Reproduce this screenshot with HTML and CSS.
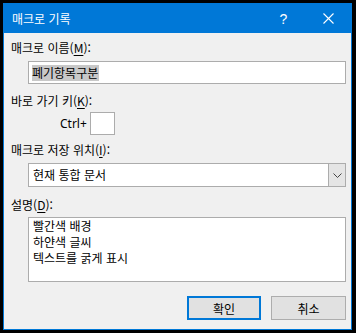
FILE: index.html
```html
<!DOCTYPE html>
<html lang="ko">
<head>
  <meta charset="UTF-8" />
  <title>매크로 기록</title>
  <link rel="stylesheet" href="styles.css">
</head>
<body>
  <div class="window">
    <div class="titlebar">
      <span class="title">매크로 기록</span>
      <span class="tbtn">?</span>
      <span class="tbtn">
        <svg width="11" height="11" viewBox="0 0 11 11"><path d="M0.5 0.5 L10.5 10.5 M10.5 0.5 L0.5 10.5" stroke="#fff" stroke-width="1.1" fill="none"/></svg>
      </span>
    </div>

    <div class="content">
      <div class="label">매크로 이름(<u>M</u>):</div>
      <div class="field name"><span class="sel">폐기항목구분</span></div>

      <div class="label gap">바로 가기 키(<u>K</u>):</div>
      <div class="shortcut">
        <span>Ctrl+</span>
        <span class="keybox"></span>
      </div>

      <div class="label gap2">매크로 저장 위치(<u>I</u>):</div>
      <div class="field combo">
        <span class="combo-text">현재 통합 문서</span>
        <span class="combo-btn">
          <svg width="9" height="5" viewBox="0 0 9 5"><path d="M0.5 0.5 L4.5 4.5 L8.5 0.5" stroke="#444" stroke-width="1" fill="none"/></svg>
        </span>
      </div>

      <div class="label gap3">설명(<u>D</u>):</div>
      <div class="field memo">
        <div class="line">빨간색 배경</div>
        <div class="line">하얀색 글씨</div>
        <div class="line">텍스트를 굵게 표시</div>
      </div>

      <div class="buttons">
        <span class="btn default">확인</span>
        <span class="btn">취소</span>
      </div>
    </div>
  </div>
</body>
</html>
```

FILE: styles.css
```css
body {
  margin: 0;
  background: #000;
  font-family: "Noto Sans CJK KR", "Noto Sans", sans-serif;
  font-size: 12px;
  color: #000;
}

.window {
  box-sizing: border-box;
  width: 349px;
  height: 327px;
  margin: 3px 0 0 3px;
  border: 1px solid #0078d7;
  background: #f0f0f0;
  display: flex;
  flex-direction: column;
}

.titlebar {
  height: 29px;
  background: #0078d7;
  color: #fff;
  display: flex;
  align-items: center;
}

.title {
  flex: 1;
  padding-left: 8px;
  line-height: 16px;
}

.tbtn {
  width: 45px;
  height: 29px;
  display: flex;
  align-items: center;
  justify-content: center;
  font-family: "Liberation Sans", sans-serif;
  font-size: 14px;
}

.content {
  padding: 7px 5px 0 7px;
}

.label {
  line-height: 16px;
  height: 16px;
}

.label u {
  text-decoration-thickness: 1px;
  text-underline-offset: 2px;
}

.gap { margin-top: 9px; }
.gap2 { margin-top: 7px; }
.gap3 { margin-top: 10px; }

.field {
  box-sizing: border-box;
  margin-left: 17px;
  border: 1px solid #acacac;
  background: #fff;
}

.name {
  margin-top: 5px;
  height: 23px;
  padding: 2px 0 0 3px;
}

.sel {
  display: inline-block;
  background: #c8c8c8;
  line-height: 16px;
  padding-right: 1px;
}

.shortcut {
  margin-top: 3px;
  padding-left: 49px;
  display: flex;
  align-items: center;
  gap: 3px;
  font-family: "Noto Sans", sans-serif;
}

.keybox {
  box-sizing: border-box;
  width: 25px;
  height: 23px;
  border: 1px solid #acacac;
  background: #fff;
}

.combo {
  margin-top: 5px;
  height: 24px;
  display: flex;
}

.combo-text {
  flex: 1;
  padding-left: 4px;
  line-height: 22px;
}

.combo-btn {
  width: 16px;
  background: #e5e5e5;
  border-left: 1px solid #acacac;
  display: flex;
  align-items: center;
  justify-content: center;
}

.memo {
  margin-top: 4px;
  height: 65px;
  padding: 0 4px;
}

.line {
  height: 16px;
  line-height: 16px;
}

.buttons {
  margin-top: 14px;
  display: flex;
  justify-content: flex-end;
  gap: 10px;
}

.btn {
  box-sizing: border-box;
  width: 75px;
  height: 24px;
  background: #e1e1e1;
  border: 1px solid #adadad;
  display: flex;
  align-items: center;
  justify-content: center;
}

.btn.default {
  width: 74px;
  border: 2px solid #0078d7;
}
```
